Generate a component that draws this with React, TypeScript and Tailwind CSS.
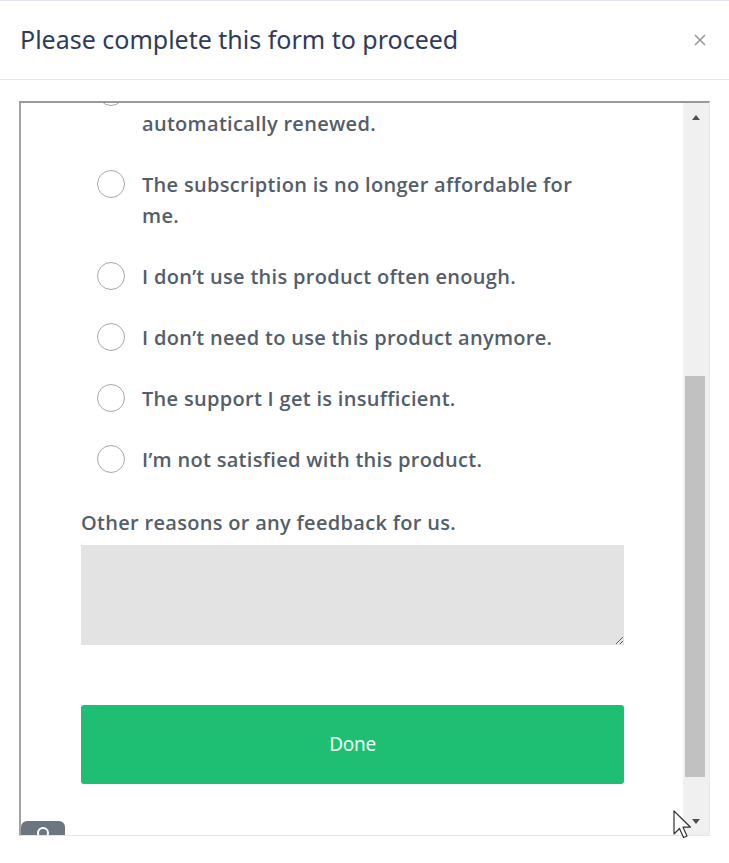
import React from "react";

const options = [
  ["I don't want my subscription to be", "automatically renewed."],
  ["The subscription is no longer affordable for", "me."],
  ["I don\u2019t use this product often enough."],
  ["I don\u2019t need to use this product anymore."],
  ["The support I get is insufficient."],
  ["I\u2019m not satisfied with this product."],
];

function Radio({ lines, first }: { lines: string[]; first?: boolean }) {
  return (
    <label className="flex items-start ml-4 gap-[17px]">
      <span className="mt-px w-[28px] h-[28px] shrink-0 rounded-full border-[1.5px] border-[#a9a9a9] bg-white" />
      <span className="w-[470px]">
        {lines.map((l, i) => (
          // the first line of the first option is scrolled out of view
          <span key={i} className={"block whitespace-nowrap " + (first && i === 0 ? "invisible" : "")}>
            {l}
          </span>
        ))}
      </span>
    </label>
  );
}

export default function App() {
  return (
    <div className="relative w-[729px] h-[863px] bg-white flex flex-col overflow-hidden">
      <header className="h-[80px] shrink-0 flex items-center justify-between pl-5 pr-[22px] border-t border-b border-t-[#e2e2ec] border-b-[#e3e5e8]">
        <h1 className="text-[25px] text-[#2f3b5c] font-['Noto_Sans',sans-serif]">
          Please complete this form to proceed
        </h1>
        <button className="text-[#9a9a9a]">
          <svg width="14" height="14" viewBox="0 0 14 14" stroke="currentColor" strokeWidth="1.6">
            <path d="M2 2l10 10M12 2L2 12" />
          </svg>
        </button>
      </header>

      <div className="flex-1 pt-[21px] px-[19px] pb-[27px]">
        <div className="relative h-full flex border-t-2 border-l-2 border-r border-b border-t-[#999] border-l-[#a3a3a3] border-r-[#e8e8e8] border-b-[#e6e6e6]">
          <div className="flex-1 overflow-hidden">
            <div className="-mt-[26px] pl-[60px] w-[603px] text-[20px] leading-[31px] font-semibold text-[#545e6a] font-['Open_Sans',sans-serif] tracking-[0.3px]">
              <div className="flex flex-col gap-[30px]">
                {options.map((o, i) => (
                  <Radio key={i} lines={o} first={i === 0} />
                ))}
              </div>
              <p className="mt-[32px]">Other reasons or any feedback for us.</p>
              <textarea className="mt-[7px] block w-[543px] h-[100px] bg-[#e3e3e3] outline-none resize" />
              <button className="mt-[60px] w-[543px] h-[79px] rounded-[3px] bg-[#1fbf73] text-[#e9fff4] text-[19px] font-normal font-['Noto_Sans',sans-serif] tracking-[-0.3px]">
                Done
              </button>
            </div>
          </div>

          <div className="w-[26px] shrink-0 bg-[#f0f0f0] flex flex-col">
            <div className="h-[28px] flex items-center justify-center">
              <span className="w-0 h-0 border-x-[4px] border-x-transparent border-b-[5px] border-b-[#505050]" />
            </div>
            <div className="flex-1 px-[2px] pr-[4px]">
              <div className="mt-[245px] h-[401px] bg-[#c1c1c1]" />
            </div>
            <div className="h-[28px] flex items-center justify-center">
              <span className="w-0 h-0 border-x-[4px] border-x-transparent border-t-[5px] border-t-[#505050]" />
            </div>
          </div>

          <div className="absolute left-0 bottom-0 w-[44px] h-[14px] rounded-t-[6px] bg-[#6b7680] overflow-hidden flex justify-center">
            <span className="mt-[6px] w-[12px] h-[12px] rounded-full border-2 border-white" />
          </div>
        </div>
      </div>

      <svg className="absolute left-[673px] top-[810px]" width="20" height="30" viewBox="0 0 20 30">
        <path
          d="M1 1v23l5.5-5.5 4 9 3.5-1.5-4-8.8H17.5z"
          fill="#fff"
          stroke="#333"
          strokeWidth="1.2"
          strokeLinejoin="round"
        />
      </svg>
    </div>
  );
}
